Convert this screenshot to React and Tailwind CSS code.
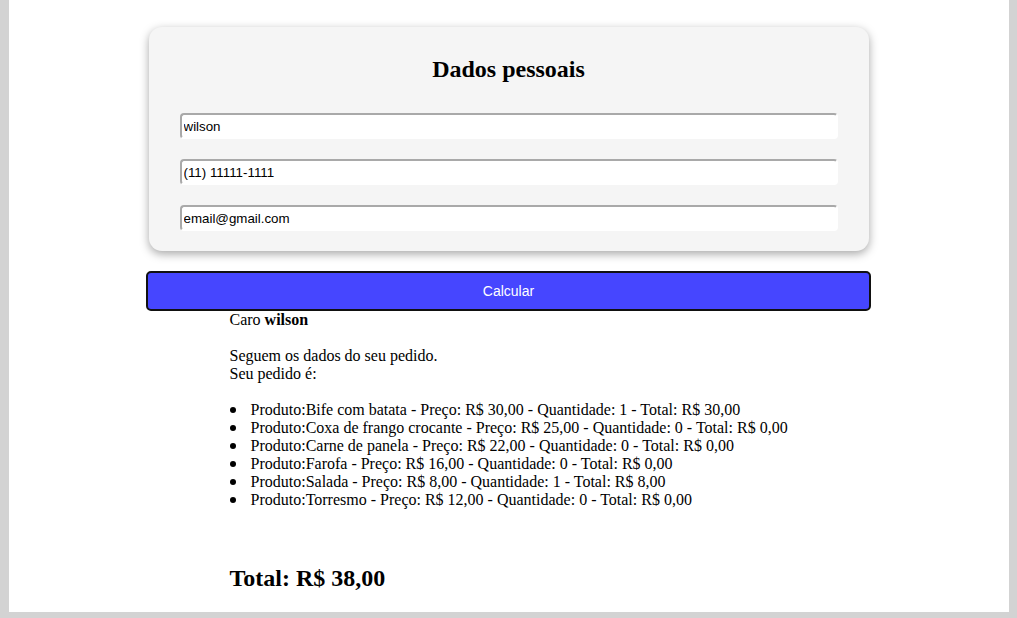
import React from 'react';

const itens = [
  { nome: 'Bife com batata', preco: '30,00', qtd: 1, total: '30,00' },
  { nome: 'Coxa de frango crocante', preco: '25,00', qtd: 0, total: '0,00' },
  { nome: 'Carne de panela', preco: '22,00', qtd: 0, total: '0,00' },
  { nome: 'Farofa', preco: '16,00', qtd: 0, total: '0,00' },
  { nome: 'Salada', preco: '8,00', qtd: 1, total: '8,00' },
  { nome: 'Torresmo', preco: '12,00', qtd: 0, total: '0,00' },
];

const Campo = ({ value }) => (
  <input
    readOnly
    value={value}
    className="block w-[658px] h-[26px] bg-white rounded-[4px] border-2 border-t-[#a9a9a9] border-l-[#a9a9a9] border-r-white border-b-white px-[2px] text-[13.33px] text-black font-['Liberation_Sans',Arial,sans-serif] outline-none"
  />
);

export default function App() {
  return (
    <div className="bg-[#d3d3d3] h-[618px] overflow-hidden">
      <div className="w-[1000px] h-[612px] mx-auto bg-white pt-[27px] font-['Liberation_Serif','Times_New_Roman',serif] text-black">
        {/* Card dados pessoais */}
        <div className="w-[720px] h-[224px] mx-auto bg-[#f5f5f5] rounded-[13px] shadow-[0_3px_10px_rgba(0,0,0,0.35)] px-[31px] pt-[28px]">
          <h2 className="text-center text-[24px] font-bold leading-[28px]">Dados pessoais</h2>
          <div className="mt-[30px] flex flex-col gap-[20px]">
            <Campo value="wilson" />
            <Campo value="(11) 11111-1111" />
            <Campo value="email@gmail.com" />
          </div>
        </div>

        <button className="block w-[725px] h-[40px] mx-auto mt-[20px] bg-[#4646ff] border-2 border-[#111] rounded-[5px] text-white text-[14px] font-['Liberation_Sans',Arial,sans-serif]">
          Calcular
        </button>

        {/* Resumo */}
        <div className="pl-[221px] text-[16px] leading-[18px]">
          <p>Caro <b>wilson</b></p>
          <p className="mt-[18px]">Seguem os dados do seu pedido.</p>
          <p>Seu pedido é:</p>
          <ul className="mt-[18px]">
            {itens.map((it) => (
              <li key={it.nome} className="flex">
                <span className="w-[21px] shrink-0 flex items-center pb-[1px]">
                  <span className="w-[6px] h-[6px] rounded-full bg-black" />
                </span>
                <span>
                  Produto:{it.nome} - Preço: R$ {it.preco} - Quantidade: {it.qtd} - Total: R$ {it.total}
                </span>
              </li>
            ))}
          </ul>
          <h2 className="mt-[55px] text-[24px] font-bold leading-[28px]">Total: R$ 38,00</h2>
        </div>
      </div>
    </div>
  );
}
